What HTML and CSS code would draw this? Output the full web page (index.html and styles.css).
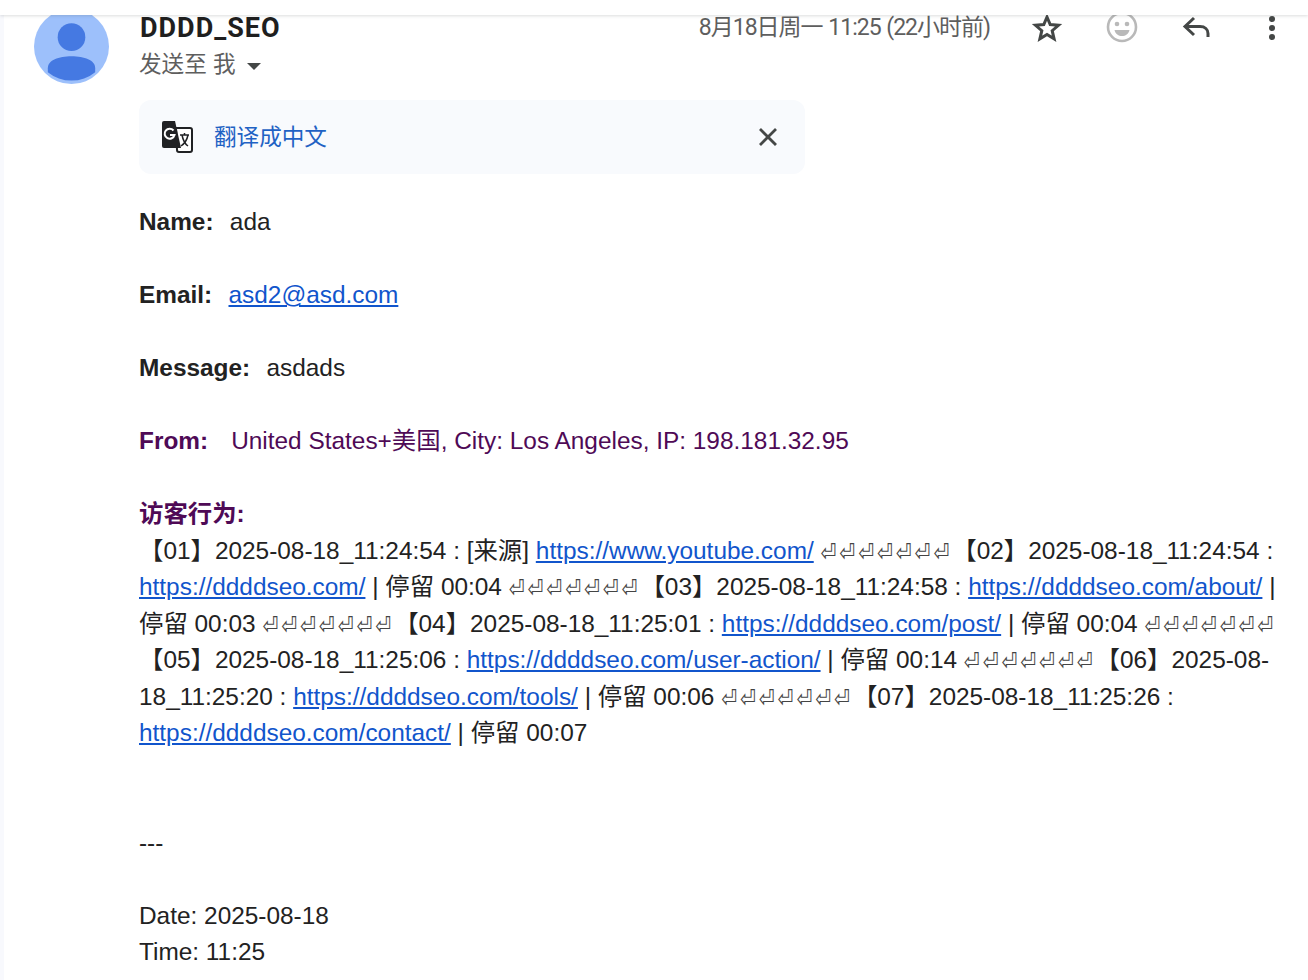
FILE: index.html
```html
<!DOCTYPE html>
<html lang="zh-CN">
<head>
  <meta charset="UTF-8">
  <title>DDDD_SEO</title>
  <link rel="stylesheet" href="styles.css">
</head>
<body>
  <div class="topbar"></div>
  <div class="mail">
    <div class="avatar">
      <svg width="75" height="75" viewBox="0 0 76 76">
        <circle cx="38" cy="38" r="38" fill="#9dc0fb"/>
        <circle cx="38" cy="28.500" r="14" fill="#4579e2"/>
        <path d="M14 60c0-8 11-12 24-12s24 4 24 12v4a38 38 0 0 1-48 0z" fill="#4579e2"/>
      </svg>
    </div>
    <div class="main">
      <div class="head">
        <div class="sender">
          <div class="name">DDDD_SEO</div>
          <div class="to">发送至 我 <span class="caret"></span></div>
        </div>
        <div class="time">8月18日周一 11:25 (22小时前)</div>
        <div class="actions">
          <svg width="32" height="32" viewBox="0 0 32 32"><path d="M16 5l3.2 7.6 8.3.7-6.3 5.4 1.9 8.1-7.100-4.300-7.100 4.300 1.900-8.100-6.300-5.400 8.300-.7z" fill="none" stroke="#444746" stroke-width="3" stroke-linejoin="miter"/></svg>
          <svg width="32" height="32" viewBox="0 0 32 32"><circle cx="16" cy="15" r="14" fill="none" stroke="#b9b9b9" stroke-width="2.600"/><circle cx="11" cy="12" r="2.300" fill="#b9b9b9"/><circle cx="21" cy="12" r="2.300" fill="#b9b9b9"/><path d="M8.500 18h15c-1 4-4 6-7.500 6s-6.500-2-7.500-6z" fill="#b9b9b9"/></svg>
          <svg width="32" height="32" viewBox="0 0 32 32"><path d="M13 6L4 14.500 13 23M5 14.500h14c5 0 8 3 8 7V25" fill="none" stroke="#444746" stroke-width="3"/></svg>
          <svg width="32" height="32" viewBox="0 0 32 32"><circle cx="16" cy="7" r="3" fill="#444746"/><circle cx="16" cy="16" r="3" fill="#444746"/><circle cx="16" cy="25" r="3" fill="#444746"/></svg>
        </div>
      </div>

      <div class="translate">
        <svg class="gt" width="32" height="32" viewBox="0 0 32 32">
          <path d="M15 7h14a2 2 0 0 1 2 2v20a2 2 0 0 1-2 2H18a2 2 0 0 1-2-2z" fill="#fff" stroke="#202124" stroke-width="2"/>
          <path d="M3 0h11l6 27H3a2 2 0 0 1-2-2V2a2 2 0 0 1 2-2z" fill="#202124"/>
          <path d="M12.500 9.500A5 5 0 1 0 13.500 14H9" fill="none" stroke="#fff" stroke-width="2"/>
          <path d="M19 14h9M23.500 12v2M21 14c1 5 3 9 6 11M27 14c-1 5-4 9-7 11" fill="none" stroke="#202124" stroke-width="1.500"/>
        </svg>
        <span class="translate-link">翻译成中文</span>
        <svg class="close" width="24" height="24" viewBox="0 0 24 24"><path d="M4 4l16 16M20 4L4 20" stroke="#444746" stroke-width="2.800"/></svg>
      </div>

      <div class="body">
        <p class="line"><b>Name:</b>ada</p>
        <p class="line"><b>Email:</b><a href="#">asd2@asd.com</a></p>
        <p class="line"><b>Message:</b>asdads</p>
        <p class="line from"><b>From:</b> United States+美国, City: Los Angeles, IP: 198.181.32.95</p>
        <p class="from"><strong>访客行为:</strong></p>
        <p class="log">【01】2025-08-18_11:24:54 : [来源] <a href="#">https://www.youtube.com/</a> <span class="ret">⏎⏎⏎⏎⏎⏎⏎</span>【02】2025-08-18_11:24:54 : <a href="#">https://ddddseo.com/</a> | 停留 00:04 <span class="ret">⏎⏎⏎⏎⏎⏎⏎</span>【03】2025-08-18_11:24:58 : <a href="#">https://ddddseo.com/about/</a> | 停留 00:03 <span class="ret">⏎⏎⏎⏎⏎⏎⏎</span>【04】2025-08-18_11:25:01 : <a href="#">https://ddddseo.com/post/</a> | 停留 00:04 <span class="ret">⏎⏎⏎⏎⏎⏎⏎</span>【05】2025-08-18_11:25:06 : <a href="#">https://ddddseo.com/user-action/</a> | 停留 00:14 <span class="ret">⏎⏎⏎⏎⏎⏎⏎</span>【06】2025-08-18_11:25:20 : <a href="#">https://ddddseo.com/tools/</a> | 停留 00:06 <span class="ret">⏎⏎⏎⏎⏎⏎⏎</span>【07】2025-08-18_11:25:26 : <a href="#">https://ddddseo.com/contact/</a> | 停留 00:07</p>
        <p class="dashes">---</p>
        <p>Date: 2025-08-18</p>
        <p>Time: 11:25</p>
      </div>
    </div>
  </div>
</body>
</html>
```

FILE: styles.css
```css
body {
  margin: 0;
  height: 980px;
  overflow: hidden;
  background: #fff;
  font-family: "Liberation Sans", "Noto Sans CJK SC", sans-serif;
  color: #222;
}

.topbar {
  position: relative;
  z-index: 2;
  height: 15px;
  background: #fff;
  box-shadow: 0 1px 3px rgba(60, 64, 67, 0.18);
}

.mail {
  display: flex;
  height: 965px;
  padding-left: 34px;
  border-left: 4px solid #f8f9fd;
}

.avatar {
  flex: none;
  width: 76px;
  height: 76px;
  margin: -6px 29px 0 -4px;
}

.avatar svg {
  display: block;
}

.main {
  flex: 1;
  min-width: 0;
}

.head {
  display: flex;
  align-items: flex-start;
  height: 85px;
}

.sender {
  flex: 1;
}

.name {
  margin-left: 1px;
  font-family: Roboto, "Liberation Sans", sans-serif;
  font-size: 27px;
  font-weight: 700;
  line-height: 26px;
  letter-spacing: 1px;
  color: #1f1f1f;
}

.to {
  margin-top: 9px;
  font-size: 22.600px;
  line-height: 30px;
  color: #5e5e5e;
}

.caret {
  display: inline-block;
  margin-left: 5px;
  vertical-align: middle;
  border-top: 7px solid #444746;
  border-left: 7px solid transparent;
  border-right: 7px solid transparent;
}

.time {
  font-family: Roboto, "Noto Sans CJK SC", sans-serif;
  font-size: 23px;
  line-height: 26px;
  letter-spacing: -1px;
  word-spacing: 1px;
  color: #5e5e5e;
}

.actions {
  display: flex;
  gap: 43px;
  margin: -3px 20px 0 41px;
}

.translate {
  display: flex;
  align-items: center;
  width: 666px;
  height: 74px;
  background: #f8fafd;
  border-radius: 12px;
}

.gt {
  margin-left: 22px;
}

.translate-link {
  flex: 1;
  margin: -4px 0 0 21px;
  font-size: 22.600px;
  color: #1f62c4;
}

.close {
  margin-right: 25px;
}

.body {
  padding-top: 30.300px;
  font-size: 24.400px;
  line-height: 36.500px;
}

p {
  margin: 0;
}

.line {
  margin-bottom: 36.500px;
}

.line b {
  margin-right: 16.300px;
  font-weight: 700;
}

.from {
  color: #4f0a56;
}

.log {
  width: 1140px;
}

a {
  color: #1155cc;
}

.ret {
  display: inline-block;
  font-family: "DejaVu Sans", sans-serif;
  font-size: 19px;
  line-height: 0;
  letter-spacing: 2.900px;
  color: #444;
  transform: scaleY(1.3);
}

.dashes {
  margin: 73px 0 36.500px;
}
```
